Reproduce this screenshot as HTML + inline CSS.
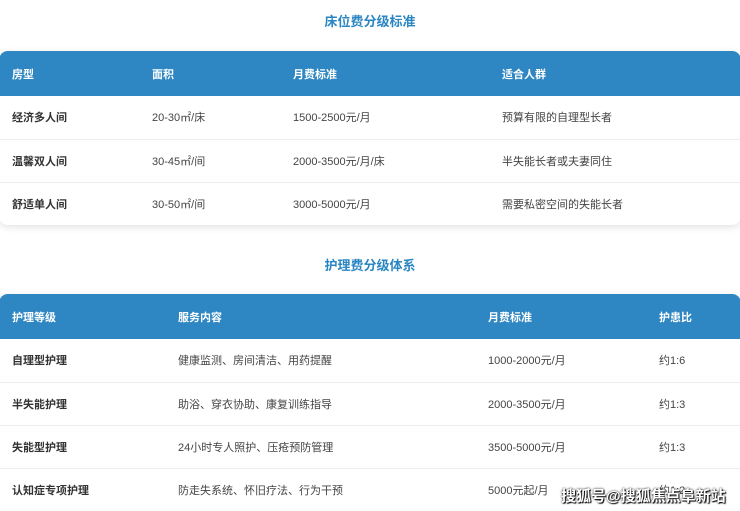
<!DOCTYPE html>
<html><head><meta charset="utf-8"><style>
body{margin:0;width:740px;height:511px;overflow:hidden;background:#fff;font-family:"Liberation Sans","Noto Sans CJK SC",sans-serif;position:relative}
.t{position:absolute;left:0;width:740px;text-align:center;color:#2a86c2;font-weight:bold;font-size:13px}
.card{position:absolute;left:-1px;width:742px;border-radius:9px;overflow:hidden;background:#fff;box-shadow:0 2px 8px rgba(0,0,0,.12)}
.row{position:relative;box-sizing:border-box;height:43px;border-top:1px solid #ececec;font-size:11px;color:#444}
.row span{position:absolute;top:13px}
.row span.b{font-weight:bold;color:#333}
.h{background:#2e87c2;color:#fff;font-weight:bold;border:none;height:45px}
.h span{top:15px}
.wm{position:absolute;left:561px;top:485px;font-size:15px;color:#fff;font-weight:bold;text-shadow:0 0 2px #000,1px 1px 1px #000}
</style></head><body>
<div class="t" style="top:11px">床位费分级标准</div>
<div class="card" style="top:51px">
<div class="row h"><span style="left:13px">房型</span><span style="left:153px">面积</span><span style="left:294px">月费标准</span><span style="left:503px">适合人群</span></div>
<div class="row" style="border-top:none"><span class="b" style="left:13px">经济多人间</span><span style="left:153px">20-30㎡/床</span><span style="left:294px">1500-2500元/月</span><span style="left:503px">预算有限的自理型长者</span></div>
<div class="row"><span class="b" style="left:13px">温馨双人间</span><span style="left:153px">30-45㎡/间</span><span style="left:294px">2000-3500元/月/床</span><span style="left:503px">半失能长者或夫妻同住</span></div>
<div class="row"><span class="b" style="left:13px">舒适单人间</span><span style="left:153px">30-50㎡/间</span><span style="left:294px">3000-5000元/月</span><span style="left:503px">需要私密空间的失能长者</span></div>
</div>
<div class="t" style="top:255px">护理费分级体系</div>
<div class="card" style="top:294px;border-bottom-left-radius:0;border-bottom-right-radius:0">
<div class="row h"><span style="left:13px">护理等级</span><span style="left:179px">服务内容</span><span style="left:489px">月费标准</span><span style="left:660px">护患比</span></div>
<div class="row" style="border-top:none"><span class="b" style="left:13px">自理型护理</span><span style="left:179px">健康监测、房间清洁、用药提醒</span><span style="left:489px">1000-2000元/月</span><span style="left:660px">约1:6</span></div>
<div class="row"><span class="b" style="left:13px">半失能护理</span><span style="left:179px">助浴、穿衣协助、康复训练指导</span><span style="left:489px">2000-3500元/月</span><span style="left:660px">约1:3</span></div>
<div class="row"><span class="b" style="left:13px">失能型护理</span><span style="left:179px">24小时专人照护、压疮预防管理</span><span style="left:489px">3500-5000元/月</span><span style="left:660px">约1:3</span></div>
<div class="row"><span class="b" style="left:13px">认知症专项护理</span><span style="left:179px">防走失系统、怀旧疗法、行为干预</span><span style="left:489px">5000元起/月</span><span style="left:660px">约1:2</span></div>
</div>
<div class="wm">搜狐号@搜狐焦点阜新站</div>
</body></html>
